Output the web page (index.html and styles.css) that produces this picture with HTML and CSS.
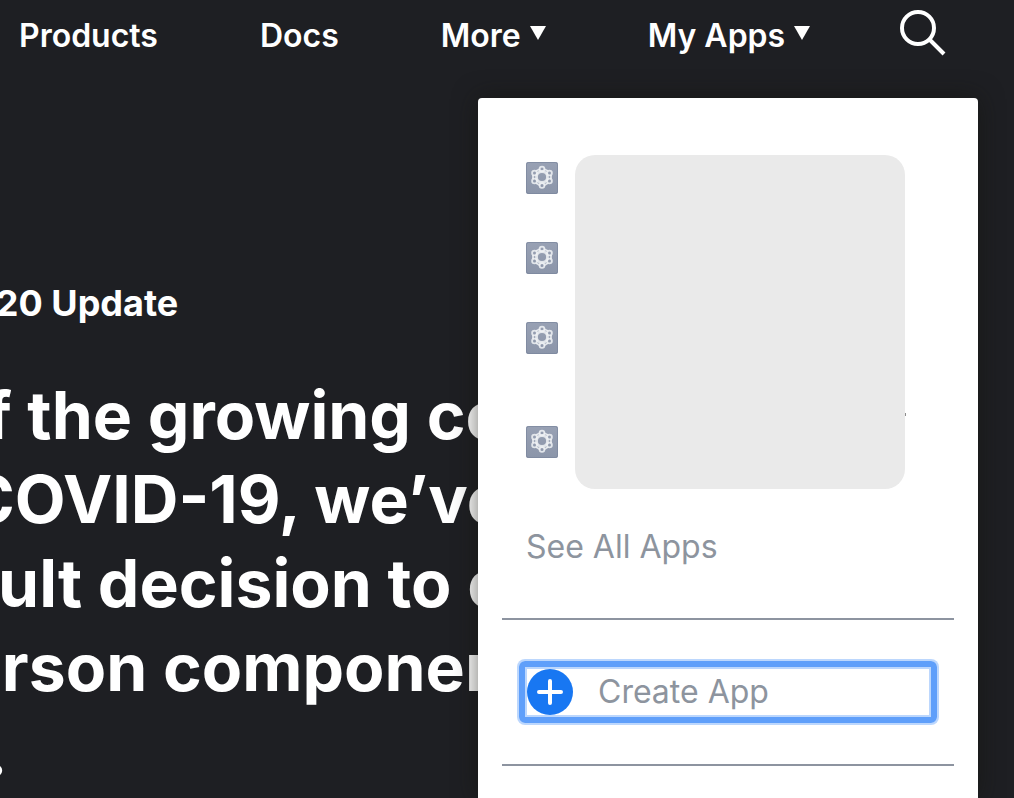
FILE: index.html
```html
<!DOCTYPE html>
<html lang="en">
<head>
<meta charset="utf-8">
<title>Developers</title>
<link rel="stylesheet" href="styles.css">
</head>
<body>
<svg class="defs" aria-hidden="true">
  <defs>
    <linearGradient id="tile" x1="0" y1="0" x2="0" y2="1">
      <stop offset="0" stop-color="#98a1b4"/>
      <stop offset="1" stop-color="#8b95a9"/>
    </linearGradient>
    <symbol id="app" viewBox="0 0 32 32">
      <rect width="32" height="32" rx="2" fill="url(#tile)"/>
      <rect x=".5" y=".5" width="31" height="31" rx="2" stroke="#7b869d" stroke-opacity=".7" fill="none"/>
      <g fill="none" stroke="#f0f2f5" stroke-opacity=".85" stroke-width="1.800">
        <circle cx="16" cy="15" r="5.500" stroke-width="2.800"/>
        <circle cx="16" cy="7" r="2.400"/>
        <circle cx="23.500" cy="11" r="2.400"/>
        <circle cx="23.500" cy="19" r="2.400"/>
        <circle cx="16" cy="23.500" r="2.400"/>
        <circle cx="8.500" cy="19" r="2.400"/>
        <circle cx="8.500" cy="11" r="2.400"/>
        <path d="M14 7L10 9M18 7l4 2M25 13v4M7 13v4M10 21l4 2.500M22 21l-4 2.500"/>
      </g>
    </symbol>
  </defs>
</svg>
<header class="nav">
  <nav class="nav-links">
    <a href="#">Products</a>
    <a href="#">Docs</a>
    <button type="button">More<svg class="caret" viewBox="0 0 16 14"><path d="M0 0h16L8 14z" fill="currentColor"/></svg></button>
    <button type="button" aria-expanded="true">My Apps<svg class="caret" viewBox="0 0 16 14"><path d="M0 0h16L8 14z" fill="currentColor"/></svg></button>
  </nav>
  <button type="button" class="search" aria-label="Search">
    <svg viewBox="0 0 46 46" fill="none" stroke="currentColor" stroke-width="4"><circle cx="18" cy="18" r="16"/><path d="M29 29l15 15"/></svg>
  </button>
</header>
<main class="hero">
  <p class="date">27 Feb 2020 Update</p>
  <h1>of the growing co<br>COVID-19, we’ve<br>difficult decision to c<br>in-person componen<span class="last">F8 2020.</span></h1>
</main>
<aside class="menu">
  <div class="apps">
    <ul class="app-list">
      <li><a href="#" aria-label="App 1"><svg><use href="#app"/></svg></a></li>
      <li><a href="#" aria-label="App 2"><svg><use href="#app"/></svg></a></li>
      <li class="tall"><a href="#" aria-label="App 3"><svg><use href="#app"/></svg></a></li>
      <li><a href="#" aria-label="App 4"><svg><use href="#app"/></svg></a></li>
    </ul>
    <div class="names"></div>
  </div>
  <a class="all" href="#">See All Apps</a>
  <hr>
  <button type="button" class="create">
    <svg viewBox="0 0 46 46"><circle cx="23" cy="23" r="23" fill="#1877f2"/><path d="M23 12v22M12 23h22" stroke="#fff" stroke-width="4" stroke-linecap="round"/></svg>
    Create App
  </button>
  <hr>
</aside>
</body>
</html>
```
FILE: styles.css
```css
* { box-sizing: border-box; }
body {
  margin: 0;
  min-height: 100vh;
  overflow: hidden;
  position: relative;
  background: #1e1f23;
  color: #fff;
  font-family: Inter, "Liberation Sans", sans-serif;
}
a { color: inherit; text-decoration: none; }
button {
  padding: 0;
  border: 0;
  background: none;
  color: inherit;
  font: inherit;
}
svg { display: block; }
.defs { position: absolute; width: 0; height: 0; }

.nav {
  display: flex;
  justify-content: space-between;
  padding: 10px 68px 0 19px;
  height: 98px;
}
.nav-links {
  display: flex;
  align-items: flex-start;
  gap: 102px;
  padding-top: 6px;
  font-size: 32px;
  line-height: 40px;
  font-weight: 600;
}
.nav-links button { display: flex; gap: 9px; white-space: nowrap; }
.caret { width: 16px; height: 14px; margin-top: 10px; }
.search { align-self: flex-start; }
.search svg { width: 46px; height: 46px; }

.hero {
  margin: 0 508px 0 -282px;
  padding-top: 181px;
  white-space: nowrap;
}
.date {
  margin: 0;
  padding-left: 106px;
  font-size: 36px;
  line-height: 48px;
  font-weight: 700;
}
h1 {
  margin: 46px 0 0;
  font-size: 66px;
  line-height: 84px;
  font-weight: 700;
  text-align: right;
}
.last { display: block; text-align: left; }

.menu {
  position: absolute;
  top: 98px;
  right: 36px;
  width: 500px;
  min-height: calc(100vh - 98px);
  padding: 57px 24px 32px;
  border-radius: 4px 4px 0 0;
  background: #fff;
  box-shadow: 0 0 24px rgba(20, 20, 14, .6);
  color: #8d949e;
  font-size: 32px;
  line-height: 40px;
}
.apps { display: flex; gap: 17px; padding: 0 49px 0 24px; }
.app-list { margin: 0; padding: 7px 0 0; list-style: none; }
.app-list li { height: 80px; }
.app-list .tall { height: 104px; }
.app-list li:last-child { height: 32px; }
.app-list svg { width: 32px; height: 32px; }
.names {
  position: relative;
  flex: 1;
  height: 334px;
  border-radius: 20px;
  background: #eaeaea;
}
.names::after {
  content: "";
  position: absolute;
  top: 258px;
  left: 100%;
  width: 1px;
  height: 3px;
  background: #8d8d8d;
}
.all { display: block; margin: 38px 24px 51px; }
hr { height: 2px; margin: 0; border: 0; background: #8d94a0; }
.create {
  display: flex;
  align-items: center;
  gap: 25px;
  width: 418px;
  margin: 41px 17px;
  padding: 2px;
  border: 6px solid #5f9ffa;
  border-radius: 6px;
  box-shadow: 0 0 0 2px #bcd7fd, inset 0 0 0 2px #bcd7fd;
}
.create svg { width: 46px; height: 46px; }
```
